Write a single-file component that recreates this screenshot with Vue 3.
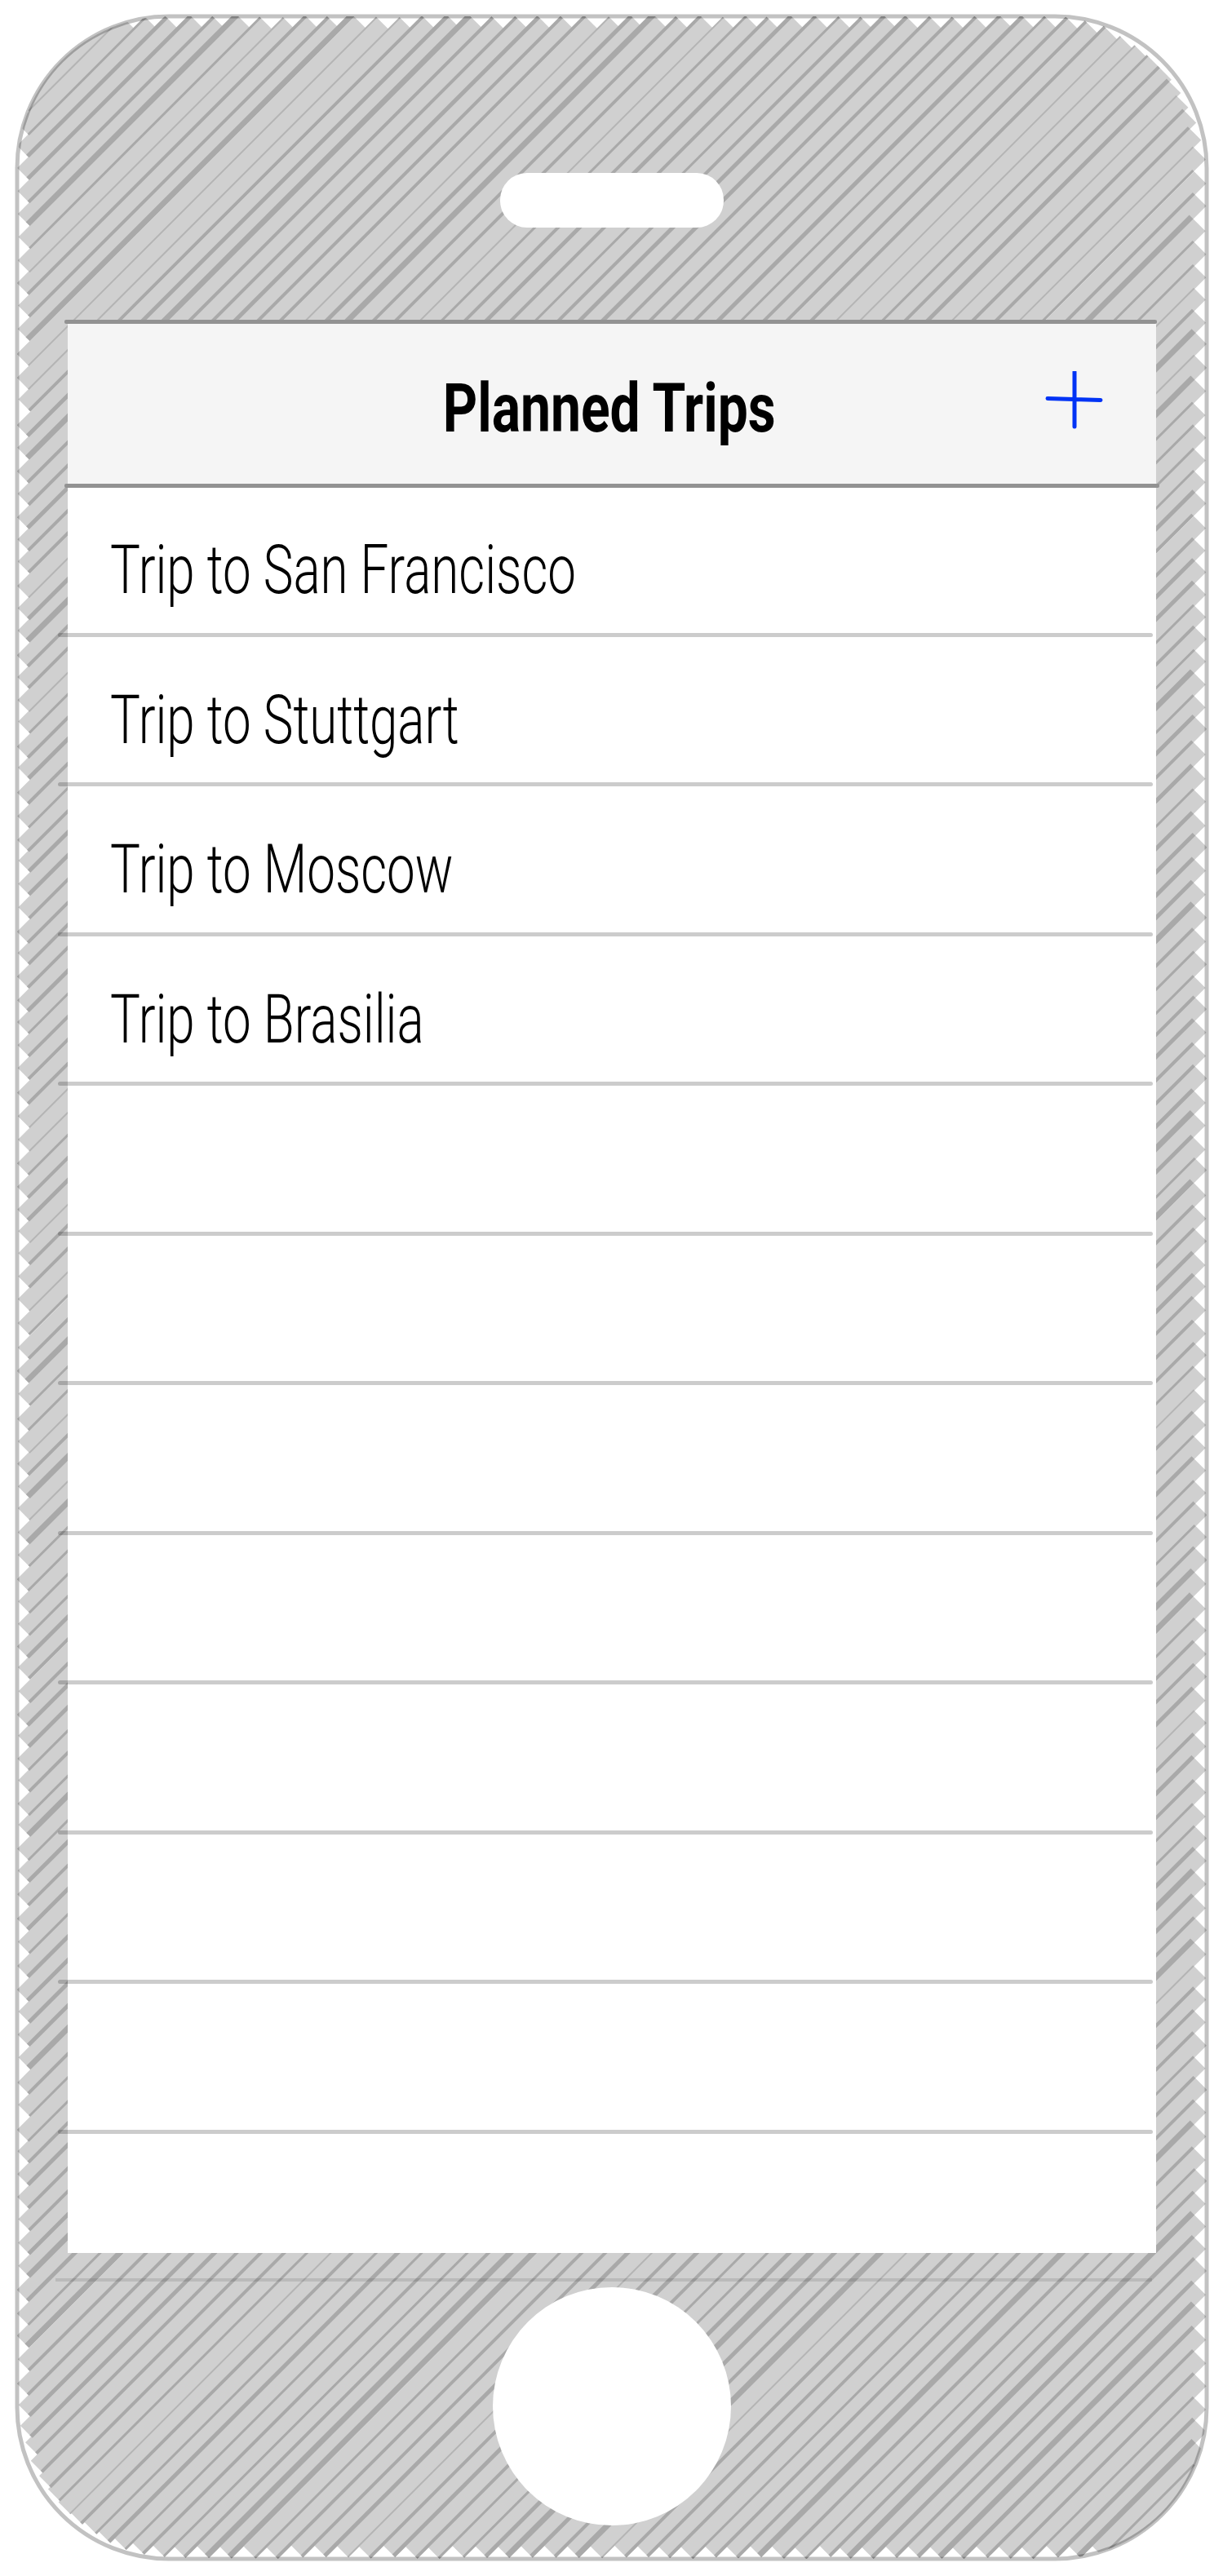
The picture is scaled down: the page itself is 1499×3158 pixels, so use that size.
<script setup>
const trips = ['Trip to San Francisco', 'Trip to Stuttgart', 'Trip to Moscow', 'Trip to Brasilia', '', '', '', '', '', '', '']

// sketchy hatch: diagonal bars with cut ends, darker stripes where two bars meet
const L = 21, T = 20, R = 1479, B = 3137, RAD = 186
const inset = 7
const W = 21

function inBody(x, y) {
  if (x < L + inset || x > R - inset || y < T + inset || y > B - inset) return false
  const cx1 = L + RAD, cx2 = R - RAD, cy1 = T + RAD, cy2 = B - RAD
  const r = RAD - 7
  if (x < cx1 && y > cy2) return Math.hypot(x - cx1, y - cy2) < r
  if (x > cx2 && y < cy1) return Math.hypot(x - cx2, y - cy1) < r
  return true
}

let seed = 48271
function rnd() {
  seed = (seed * 16807) % 2147483647
  return seed / 2147483647
}
for (let i = 0; i < 20; i++) rnd()

const bars = []
for (let c = 48; c < 4640; c += 26.5 + rnd() * 3.5) {
  let first = null, last = null
  for (let x = 0; x < 1499; x++) {
    if (inBody(x, c - x)) {
      if (first === null) first = x
      last = x
    }
  }
  if (first === null) continue
  const x1 = first + rnd() * 2
  const x2 = last - rnd() * 2
  bars.push({ c, x1, y1: c - x1, x2, y2: c - x2 })
}

const stripes = []
for (let i = 0; i < bars.length - 1; i++) {
  const a = bars[i], b = bars[i + 1]
  const p = rnd()
  const lw = p < 0.12 ? 2 : p < 0.3 ? 3 : p < 0.65 ? 4 : p < 0.88 ? 5 : 7
  const cs = a.c + Math.SQRT2 * (W - lw) / 2
  const k1 = a.x1 - a.y1
  const k2 = b.x2 - b.y2
  const x1 = (cs + k1) / 2
  const x2 = (cs + k2) / 2
  if (x2 <= x1) continue
  stripes.push({ x1, y1: cs - x1, x2, y2: cs - x2, lw, color: lw === 2 ? '#b4b4b4' : '#a9a9a9' })
}
</script>

<template>
  <div class="phone">
    <svg class="hatch" width="1499" height="3158" viewBox="0 0 1499 3158">
      <defs>
        <clipPath id="body">
          <rect x="21" y="20" width="1458" height="3117" rx="186" ry="186" />
        </clipPath>
      </defs>
      <g clip-path="url(#body)">
        <line v-for="(b, i) in bars" :key="'b' + i" :x1="b.x1" :y1="b.y1" :x2="b.x2" :y2="b.y2" stroke="#d0d0d0" :stroke-width="W" />
        <line v-for="(s, i) in stripes" :key="'s' + i" :x1="s.x1" :y1="s.y1" :x2="s.x2" :y2="s.y2" :stroke="s.color" :stroke-width="s.lw" />
      </g>
      <rect x="21" y="20" width="1458" height="3117" rx="186" ry="186" fill="none" stroke="#000" stroke-opacity="0.24" stroke-width="5" />
      <line x1="68" y1="2795" x2="1412" y2="2795" stroke="#000" stroke-opacity="0.1" stroke-width="4" />
    </svg>

    <div class="speaker"></div>

    <div class="screen">
      <div class="rule-dark top"></div>
      <header class="bar">
        <span class="bar-side"></span>
        <h1 class="title">Planned Trips</h1>
        <span class="bar-side">
          <svg class="plus" width="72" height="72" viewBox="0 0 72 72">
            <path d="M3 33.5 L68 35.5 M36 1 V68" fill="none" stroke="#0033f5" stroke-width="5" stroke-linecap="round" />
          </svg>
        </span>
      </header>
      <div class="rule-dark"></div>
      <ul class="trips">
        <li v-for="(trip, i) in trips" :key="i" class="trip">
          <div class="trip-row">
            <span class="trip-name">{{ trip }}</span>
          </div>
          <div class="trip-rule"></div>
        </li>
      </ul>
    </div>

    <div class="home"></div>
  </div>
</template>

<style scoped>
.phone {
  position: relative;
  width: 1499px;
  height: 3158px;
  box-sizing: border-box;
  padding-top: 212px;
  display: flex;
  flex-direction: column;
  align-items: center;
  overflow: hidden;
  background: #fff;
  font-family: Roboto, "Liberation Sans", sans-serif;
  color: #000;
}

.hatch {
  position: absolute;
  top: 0;
  left: 0;
}

.speaker {
  position: relative;
  width: 274px;
  height: 67px;
  margin-bottom: 113px;
  border-radius: 33px;
  background: #fff;
}

.screen {
  position: relative;
  width: 1334px;
  height: 2370px;
  margin-left: 1px;
  background: #fff;
}

.rule-dark {
  height: 5px;
  margin: 0 -4px 0 -4px;
  border-radius: 2px;
  background: #929292;
}

.rule-dark.top {
  margin-right: -1px;
}

.bar {
  height: 196px;
  display: grid;
  grid-template-columns: 1fr auto 1fr;
  align-items: center;
  background: #f5f5f5;
}

.bar-side {
  display: flex;
  justify-content: flex-end;
}

.plus {
  margin: -8px 64px 0 0;
}

.title {
  margin: 12px 0 0 -6px;
  font-size: 84px;
  font-weight: 700;
  line-height: 1;
  transform: scaleX(0.785);
}

.trips {
  margin: -1px 0 0;
  padding: 0;
  list-style: none;
}

.trip {
  height: 183.5px;
  display: flex;
  flex-direction: column;
}

.trip-row {
  flex: 1;
  padding-left: 52px;
  padding-top: 26px;
  display: flex;
  align-items: center;
}

.trip-rule {
  height: 5px;
  margin: 0 4px 0 -12px;
  border-radius: 2.5px;
  background: rgba(0, 0, 0, 0.2);
}

.trip-name {
  display: inline-block;
  font-size: 84px;
  font-weight: 300;
  line-height: 1;
  white-space: nowrap;
  transform: scaleX(0.736);
  transform-origin: left center;
}

.home {
  position: relative;
  width: 292px;
  height: 292px;
  margin-top: 42px;
  border-radius: 50%;
  background: #fff;
}
</style>

<style>
html, body {
  background: #fff;
}
</style>
